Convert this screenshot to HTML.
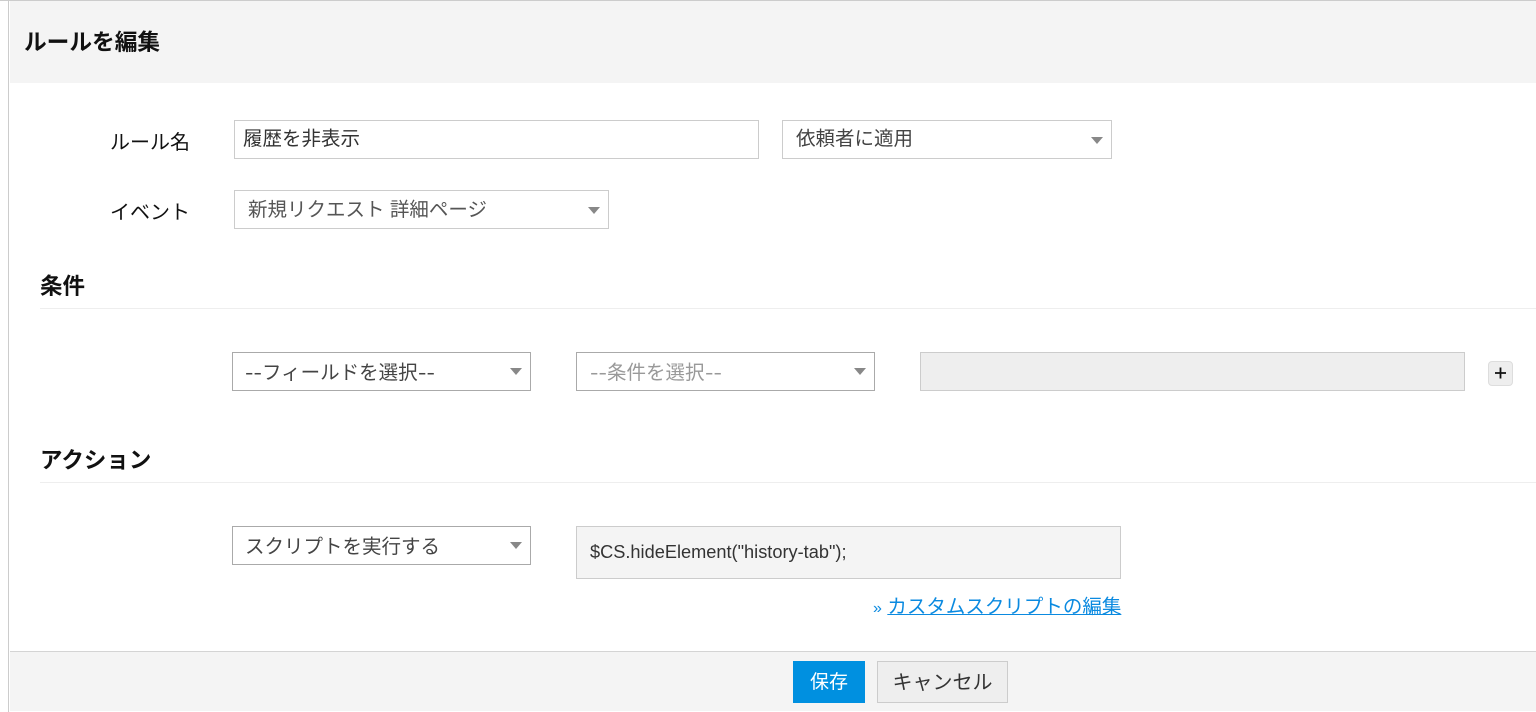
<!DOCTYPE html>
<html lang="ja">
<head>
<meta charset="utf-8">
<style>
html,body{margin:0;padding:0;width:1536px;height:712px;overflow:hidden;background:#fff;}
body{position:relative;font-family:"Liberation Sans","Noto Sans CJK JP",sans-serif;color:#333;}
.a{position:absolute;box-sizing:border-box;white-space:nowrap;}
.box{background:#fff;border:1px solid #ccc;font-size:19.5px;line-height:37px;height:39px;}
.dark{border-color:#aaa;line-height:41px;}
.arrow{position:absolute;width:0;height:0;border-left:6px solid transparent;border-right:6px solid transparent;border-top:7px solid #888;}
.lbl{font-size:20px;color:#111;line-height:26px;}
.h{font-size:22.5px;font-weight:bold;color:#111;line-height:28px;}
.rule{height:1px;background:#eee;left:40px;width:1496px;}
.d{display:inline-block;width:17px;transform:scaleX(1.3);transform-origin:left center;}
</style>
</head>
<body>
<div class="a" style="left:0;top:0;width:1536px;height:1px;background:#ccc;"></div>
<div class="a" style="left:8px;top:0;width:1px;height:712px;background:#ccc;"></div>
<div class="a" style="left:10px;top:1px;width:1526px;height:82px;background:#f4f4f4;"></div>
<div class="a" style="left:24px;top:28px;font-size:22.7px;font-weight:bold;color:#111;line-height:28px;">ルールを編集</div>

<div class="a lbl" style="left:110px;top:130px;">ルール名</div>
<div class="a box" style="left:234px;top:120px;width:525px;padding-left:8px;color:#333;line-height:36px;">履歴を非表示</div>
<div class="a box" style="left:782px;top:120px;width:330px;padding-left:13px;color:#444;">依頼者に適用<span class="arrow" style="left:308px;top:16px;"></span></div>

<div class="a lbl" style="left:110px;top:200px;">イベント</div>
<div class="a box" style="left:234px;top:190px;width:375px;padding-left:13px;color:#555;line-height:38px;">新規リクエスト 詳細ページ<span class="arrow" style="left:353px;top:16px;"></span></div>

<div class="a h" style="left:40px;top:273px;">条件</div>
<div class="a rule" style="top:308px;"></div>

<div class="a box dark" style="left:232px;top:352px;width:299px;padding-left:12px;color:#444;"><span class="d">--</span>フィールドを選択<span class="d">--</span><span class="arrow" style="left:277px;top:15px;"></span></div>
<div class="a box dark" style="left:576px;top:352px;width:299px;padding-left:13px;color:#999;"><span class="d">--</span>条件を選択<span class="d">--</span><span class="arrow" style="left:277px;top:15px;"></span></div>
<div class="a" style="left:920px;top:352px;width:545px;height:39px;background:#eee;border:1px solid #ccc;"></div>
<div class="a" style="left:1488px;top:361px;width:25px;height:25px;background:#eee;border:1px solid #ddd;border-radius:4px;">
<svg width="23" height="23" viewBox="0 0 23 23" style="display:block"><path d="M6 11h11M11.5 5.5v11" stroke="#111" stroke-width="1.8" fill="none"/></svg>
</div>

<div class="a h" style="left:40px;top:447px;">アクション</div>
<div class="a rule" style="top:482px;"></div>

<div class="a box dark" style="left:232px;top:526px;width:299px;padding-left:12px;color:#444;">スクリプトを実行する<span class="arrow" style="left:277px;top:15px;"></span></div>
<div class="a" style="left:576px;top:526px;width:545px;height:53px;background:#f4f4f4;border:1px solid #ccc;padding-left:13px;font-size:18.2px;line-height:51px;color:#333;">$CS.hideElement("history-tab");</div>
<div class="a" style="left:873px;top:594px;font-size:19.5px;line-height:26px;color:#0b8ae0;"><span style="font-size:16px;">»</span> <span style="text-decoration:underline;">カスタムスクリプトの編集</span></div>

<div class="a" style="left:10px;top:651px;width:1526px;height:60px;background:#f4f4f4;border-top:1px solid #d4d4d4;"></div>
<div class="a" style="left:793px;top:661px;width:72px;height:42px;background:#0090e0;color:#fff;font-size:19px;line-height:44px;text-align:center;">保存</div>
<div class="a" style="left:877px;top:661px;width:131px;height:42px;background:#eee;border:1px solid #ccc;color:#333;font-size:20px;line-height:42px;text-align:center;">キャンセル</div>
</body>
</html>
